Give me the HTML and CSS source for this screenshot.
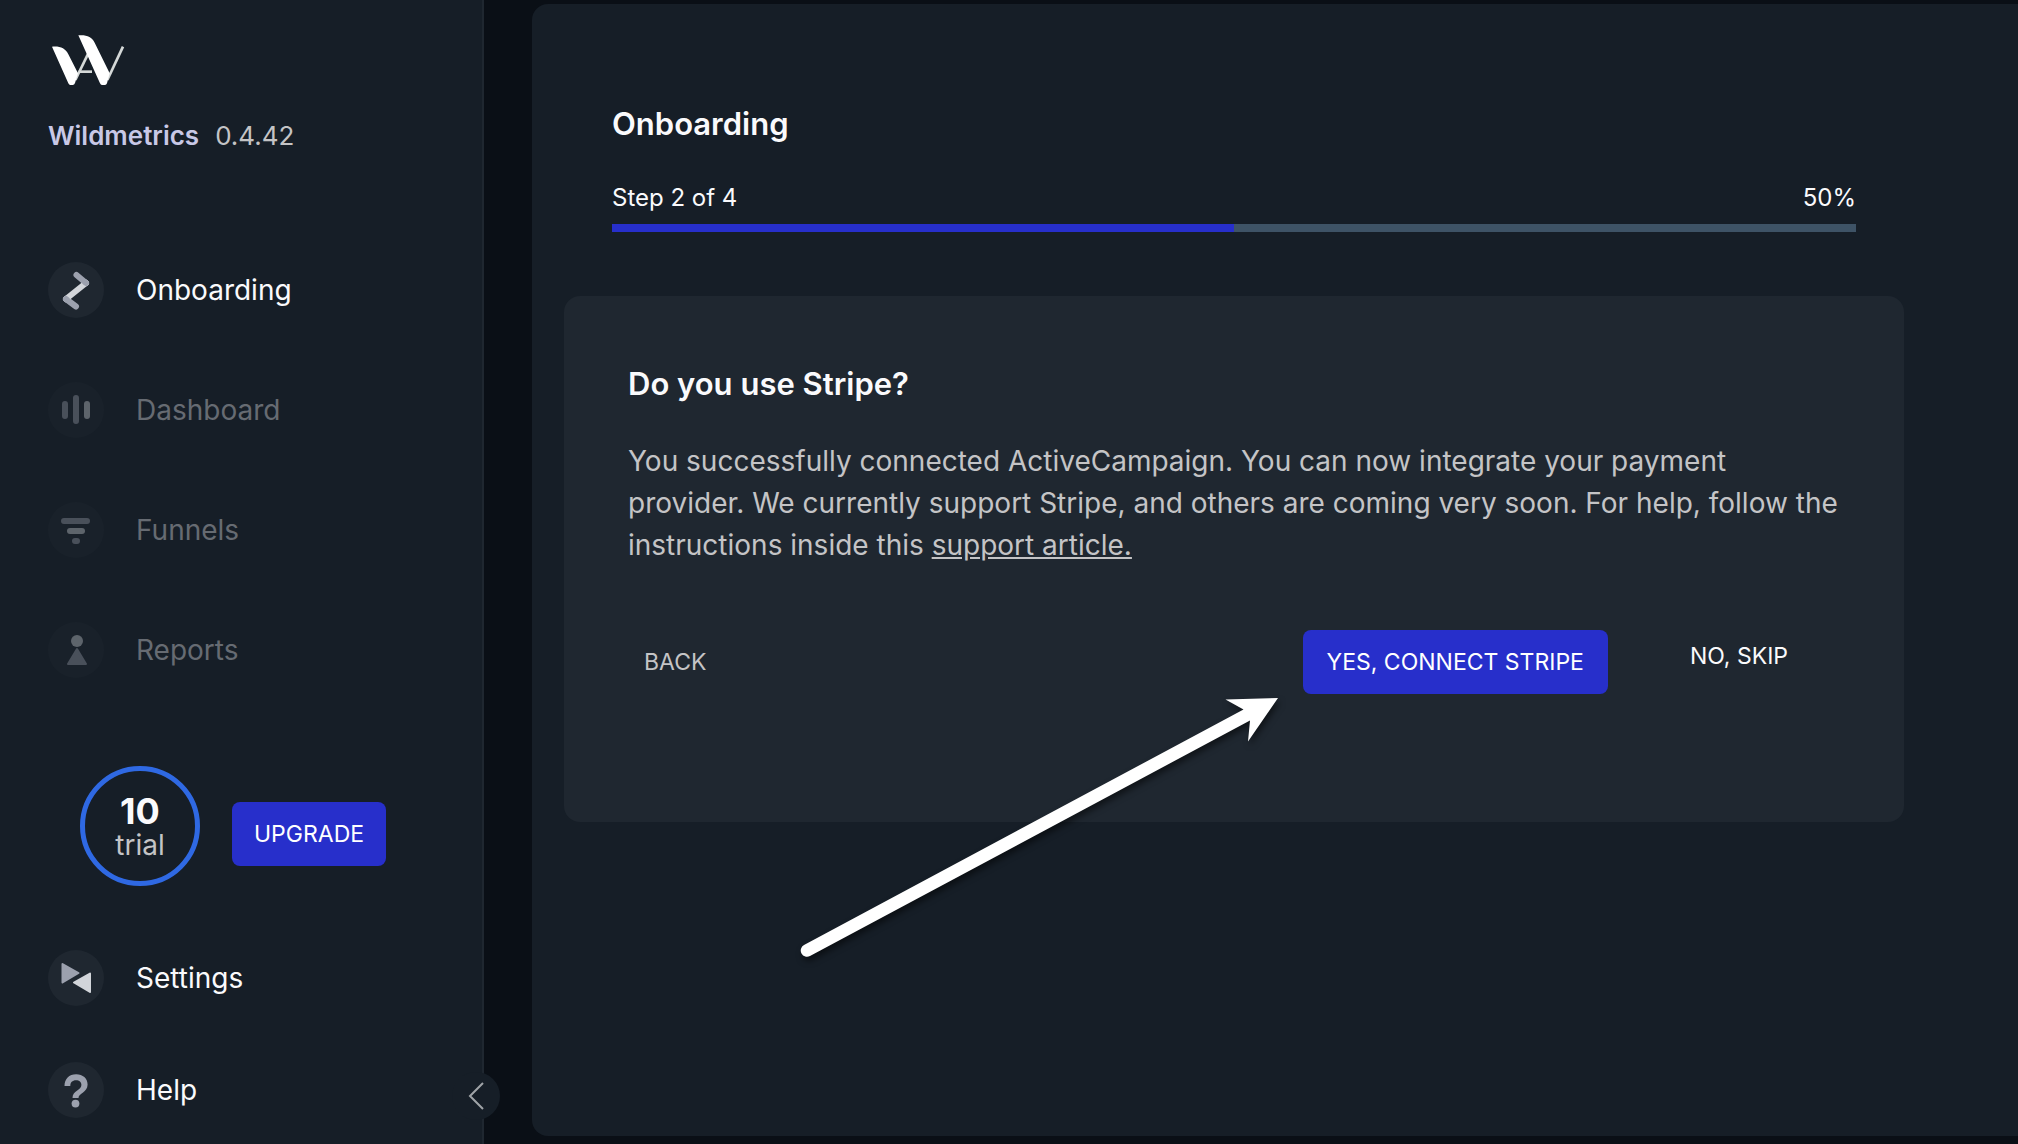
FILE: index.html
```html
<!DOCTYPE html>
<html lang="en">
<head>
  <meta charset="UTF-8">
  <meta name="viewport" content="width=device-width, initial-scale=1.0">
  <title>Wildmetrics - Onboarding</title>
  <link rel="stylesheet" href="styles.css">
</head>
<body>
  <aside class="sidebar">
    <svg class="logo" viewBox="60 40 228 160" aria-hidden="true">
      <g fill="none" stroke="#d5d9d8" stroke-width="8">
        <path d="M136 180 L176 98"/>
        <path d="M146 155 H186"/>
        <path d="M232 180 L279 80"/>
      </g>
      <path fill="#fff" d="M66 80 C90 78 106 84 115 103 L144 160 L135 189 Q133 195 128 195 H121 Q117 195 115 190 Z"/>
      <path fill="#fff" d="M145 46 C170 44 185 50 194 68 L239 160 L231 190 Q229 195 225 195 H216 Q212 195 210 190 Z"/>
    </svg>
    <div class="brand"><strong>Wildmetrics</strong> <span>0.4.42</span></div>

    <nav class="nav">
      <a class="nav-item" href="#onboarding">
        <svg class="nav-icon" viewBox="0 0 56 56" aria-hidden="true">
          <circle class="disc" cx="28" cy="28" r="28"/>
          <path class="line dim" d="M28.5 13 L38 21 M18 37 L28 44.5"/>
          <path class="line bright" d="M38 21 L18 37"/>
          <path class="line dim" d="M37 20.2 L38 21 M18 37 L19 37.8"/>
        </svg>
        Onboarding
      </a>
      <a class="nav-item disabled" href="#dashboard">
        <svg class="nav-icon" viewBox="0 0 56 56" aria-hidden="true">
          <circle class="disc" cx="28" cy="28" r="28"/>
          <path class="line dim" d="M17 22 V34 M28 16 V39"/>
          <path class="line bright" d="M39 22 V34"/>
        </svg>
        Dashboard
      </a>
      <a class="nav-item disabled" href="#funnels">
        <svg class="nav-icon" viewBox="0 0 56 56" aria-hidden="true">
          <circle class="disc" cx="28" cy="28" r="28"/>
          <path class="line dim" d="M16 19 H39 M27 39 H29"/>
          <path class="line bright" d="M22 29 H34"/>
        </svg>
        Funnels
      </a>
      <a class="nav-item disabled" href="#reports">
        <svg class="nav-icon" viewBox="0 0 56 56" aria-hidden="true">
          <circle class="disc" cx="28" cy="28" r="28"/>
          <circle class="shape bright" cx="29" cy="19" r="6"/>
          <path class="shape dim" d="M29 27 L38 42 H20 Z"/>
        </svg>
        Reports
      </a>
    </nav>

    <div class="trial">
      <div class="trial-ring"><strong>10</strong><span>trial</span></div>
      <button class="btn btn-primary" type="button">UPGRADE</button>
    </div>

    <nav class="nav nav-bottom">
      <a class="nav-item" href="#settings">
        <svg class="nav-icon" viewBox="0 0 56 56" aria-hidden="true">
          <circle class="disc" cx="28" cy="28" r="28"/>
          <path class="shape dim" d="M14.5 14 L30.5 23 L14.5 32.5 Z"/>
          <path class="shape bright" d="M42 23.5 L26 32.5 L42 42 Z"/>
        </svg>
        Settings
      </a>
      <a class="nav-item" href="#help">
        <svg class="nav-icon" viewBox="0 0 56 56" aria-hidden="true">
          <circle class="disc" cx="28" cy="28" r="28"/>
          <path class="mark" d="M16.5 24 H22.3 C22.3 20.5 24.3 18.3 28 18.3 C31.4 18.3 33.4 20.3 33.4 23 C33.4 28.5 24.5 28.5 24.5 36 H30.5 C30.5 31.5 39.6 30.5 39.6 22.6 C39.6 16.5 34.8 12.3 28.2 12.3 C21 12.3 16.5 17 16.5 24 Z"/>
          <circle class="mark" cx="27.5" cy="41.6" r="3.9"/>
        </svg>
        Help
      </a>
    </nav>

    <button class="collapse" type="button" aria-label="Collapse menu">
      <svg viewBox="0 0 48 48" aria-hidden="true"><path d="M31 11 L18 24 L31 37"/></svg>
    </button>
  </aside>

  <main class="panel">
    <header class="progress">
      <h1>Onboarding</h1>
      <div class="progress-text"><span>Step 2 of 4</span><span>50%</span></div>
      <div class="progress-track"><div class="progress-fill" style="width: 50%"></div></div>
    </header>

    <section class="card">
      <h2>Do you use Stripe?</h2>
      <p>You successfully connected ActiveCampaign. You can now integrate your payment provider. We currently support Stripe, and others are coming very soon. For help, follow the instructions inside this <a href="#support">support article.</a></p>
      <div class="actions">
        <button class="btn btn-back" type="button">BACK</button>
        <button class="btn btn-primary btn-connect" type="button">YES, CONNECT STRIPE</button>
        <button class="btn btn-skip" type="button">NO, SKIP</button>
      </div>
    </section>

    <svg class="arrow" viewBox="0 0 500 280" aria-hidden="true">
      <path d="M12 255 L451.500 19.500 L433.500 9.500 L486 8 L456 51.500 L458 30.500 L18 266 A6.200 6.200 0 0 1 12 255 Z"/>
    </svg>
  </main>
</body>
</html>
```

FILE: styles.css
```css
* {
  box-sizing: border-box;
  margin: 0;
  padding: 0;
}
body {
  display: flex;
  min-height: 100vh;
  background-color: #0a0f16;
  color: #fafafc;
  font-family: Inter, "Liberation Sans", sans-serif;
  font-size: 28px;
  line-height: 42px;
}
a {
  color: inherit;
}
button {
  border: none;
  background: none;
  color: inherit;
  font: inherit;
  cursor: pointer;
}

/* Sidebar */
.sidebar {
  position: relative;
  flex: 0 0 484px;
  padding: 33px 48px 24px;
  background-color: #161e27;
  border-right: 2px solid #1f2730;
}
.logo {
  display: block;
  width: 76px;
  height: 54px;
  margin-left: 2px;
}
.brand {
  display: flex;
  gap: 16px;
  margin-top: 28px;
  color: #c4c4c6;
  font-size: 26px;
}
.brand strong {
  color: #c8c8e6;
  font-weight: 600;
}
.nav {
  display: flex;
  flex-direction: column;
  gap: 64px;
  margin-top: 105px;
}
.nav-bottom {
  gap: 56px;
  margin-top: 64px;
}
.nav-item {
  display: flex;
  align-items: center;
  gap: 32px;
  text-decoration: none;
}
.nav-item.disabled {
  color: #666b72;
}
.nav-icon {
  width: 56px;
  height: 56px;
}
.disabled .nav-icon {
  opacity: 0.38;
}
.disc {
  fill: #1f2730;
}
.line {
  fill: none;
  stroke-width: 6;
  stroke-linecap: round;
}
.line.dim {
  stroke: #9ca1ae;
}
.line.bright {
  stroke: #d2d5da;
}
.shape {
  stroke-width: 2;
  stroke-linejoin: round;
}
.shape.dim {
  fill: #9ca1ae;
  stroke: #9ca1ae;
}
.shape.bright {
  fill: #d2d5da;
  stroke: #d2d5da;
}
circle.shape {
  stroke-width: 0;
}
.mark {
  fill: #9ca1ae;
}
.trial {
  display: flex;
  align-items: center;
  gap: 32px;
  margin: 88px 0 0 32px;
}
.trial-ring {
  display: flex;
  flex-direction: column;
  justify-content: center;
  align-items: center;
  width: 120px;
  height: 120px;
  padding-top: 4px;
  border: 5px solid #2f69e3;
  border-radius: 50%;
  color: #c4c4c6;
  line-height: 34px;
}
.trial-ring strong {
  color: #fafafc;
  font-size: 36px;
}
.trial .btn {
  margin-top: 16px;
}
.collapse {
  position: absolute;
  right: -18px;
  bottom: 24px;
  width: 48px;
  height: 48px;
  border-radius: 50%;
  background-color: #161e27;
}
.collapse svg {
  display: block;
  fill: none;
  stroke: #a0a4a8;
  stroke-width: 2;
}

/* Buttons */
.btn {
  height: 64px;
  padding: 0 22px;
  border-radius: 8px;
  font-size: 23px;
}
.btn-primary {
  background-color: #272fcb;
  color: #fff;
}

/* Main panel */
.panel {
  position: relative;
  flex: 1;
  margin: 4px 0 8px 48px;
  padding: 96px 114px 96px 32px;
  border-radius: 16px 0 0 16px;
  background-color: #161e27;
}
.progress {
  padding: 0 48px;
}
h1,
h2 {
  font-size: 31px;
  font-weight: 600;
  line-height: 48px;
}
.progress-text {
  display: flex;
  justify-content: space-between;
  margin: 32px 0 8px;
  font-size: 24px;
  line-height: 36px;
}
.progress-track {
  height: 8px;
  background-color: #3e5366;
}
.progress-fill {
  height: 100%;
  background-color: #272fcb;
}
.card {
  margin-top: 64px;
  padding: 64px 64px 128px;
  border-radius: 16px;
  background-color: #1f2730;
}
.card p {
  margin-top: 32px;
  color: #c4c4c6;
}
.actions {
  display: flex;
  margin-top: 64px;
}
.btn-back {
  margin-right: auto;
  padding: 0 16px;
  color: #c4c4c6;
}
.btn-connect {
  padding: 0 24px;
}
.btn-skip {
  height: 52px;
  margin: 0 36px 0 66px;
  padding: 0 16px;
}

/* Pointer to the connect button */
.arrow {
  position: absolute;
  top: 686px;
  left: 260px;
  width: 500px;
  height: 280px;
  fill: #fff;
  filter: drop-shadow(2px 4px 3px rgba(0, 0, 0, 0.5));
  pointer-events: none;
}
```
